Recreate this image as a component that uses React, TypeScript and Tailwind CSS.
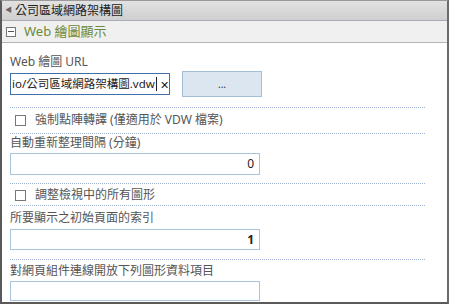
export default function App() {
  const font = { fontFamily: '"Segoe UI", "Noto Sans", "Noto Sans CJK TC", sans-serif' };
  return (
    <div className="w-[450px] h-[305px] bg-white overflow-hidden" style={font}>
      <div className="w-[449px] h-[304px] border-l-2 border-r-2 border-b-2 border-t border-l-[#5a5a5a] border-r-[#6a6a6a] border-b-[#5a5a5a] border-t-[#9a9a9a] flex flex-col overflow-hidden">
        <div className="shrink-0 h-[20px] flex items-center bg-gradient-to-b from-[#e2e2e2] to-[#cfcfcf] border-b border-[#a6adb5] pl-[3px]">
          <span className="text-[7px] text-[#666] mr-[3px]">◀</span>
          <span className="text-[12px] text-[#222] leading-none">公司區域網路架構圖</span>
        </div>
        <div className="shrink-0 h-[22px] flex items-center bg-[#f0f0f0] border-b border-[#b4b4b4] pl-[4px]">
          <div className="w-[10px] h-[10px] border border-[#777] bg-white flex items-center justify-center">
            <div className="w-[6px] h-px bg-[#555]" />
          </div>
          <span className="ml-[8px] text-[13px] text-[#6b8a3a] leading-none">Web 繪圖顯示</span>
        </div>
        <div className="flex flex-col pl-[8px] pt-[12px]">
          <div className="text-[12px] text-[#555] leading-[14px]">Web 繪圖 URL</div>
          <div className="flex items-center mt-[2px]">
            <div className="w-[160px] h-[22px] border border-[#3e6fa8] flex items-center pl-[1px] text-[12px] text-[#222] whitespace-nowrap overflow-hidden">
              <span className="leading-none text-[11.5px]">io/公司區域網路架構圖.vdw</span>
              <span className="shrink-0 w-px h-[14px] bg-[#222] ml-[1px]" />
              <span className="ml-[3px] text-[11px] leading-none">✕</span>
            </div>
            <div className="ml-[12px] w-[80px] h-[26px] bg-[#dbe6f1] border border-[#a7bfd6] flex items-center justify-center text-[10px] text-[#333]">...</div>
          </div>
          <div className="w-[415px] border-t border-dotted border-[#9fb4d2] mt-[10px]" />
          <div className="flex items-center h-[22px] mt-[1px]">
            <div className="ml-[5px] w-[11px] h-[11px] border border-[#777] bg-white" />
            <span className="ml-[9px] text-[12px] text-[#555] leading-none">強制點陣轉譯 (僅適用於 VDW 檔案)</span>
          </div>
          <div className="w-[415px] border-t border-dotted border-[#9fb4d2] mt-[2px]" />
          <div className="text-[12px] text-[#555] leading-[14px] mt-[2px]">自動重新整理間隔 (分鐘)</div>
          <div className="w-[250px] h-[22px] border border-[#a9c3da] mt-[3px] flex items-center justify-end pr-[5px] text-[12px] text-[#222]">0</div>
          <div className="w-[415px] border-t border-dotted border-[#9fb4d2] mt-[8px]" />
          <div className="flex items-center h-[20px] mt-[1px]">
            <div className="ml-[5px] w-[11px] h-[11px] border border-[#777] bg-white" />
            <span className="ml-[9px] text-[12px] text-[#555] leading-none">調整檢視中的所有圖形</span>
          </div>
          <div className="w-[415px] border-t border-dotted border-[#9fb4d2]" />
          <div className="text-[12px] text-[#555] leading-[14px] mt-[5px]">所要顯示之初始頁面的索引</div>
          <div className="w-[250px] h-[21px] border border-[#a9c3da] mt-[4px] flex items-center justify-end pr-[5px] text-[12px] text-[#222] font-bold">1</div>
          <div className="w-[415px] border-t border-dotted border-[#9fb4d2] mt-[9px]" />
          <div className="text-[12px] text-[#555] leading-[14px] mt-[4px]">對網頁組件連線開放下列圖形資料項目</div>
          <div className="w-[250px] h-[20px] border border-[#a9c3da] mt-[3px]" />
        </div>
      </div>
    </div>
  );
}
